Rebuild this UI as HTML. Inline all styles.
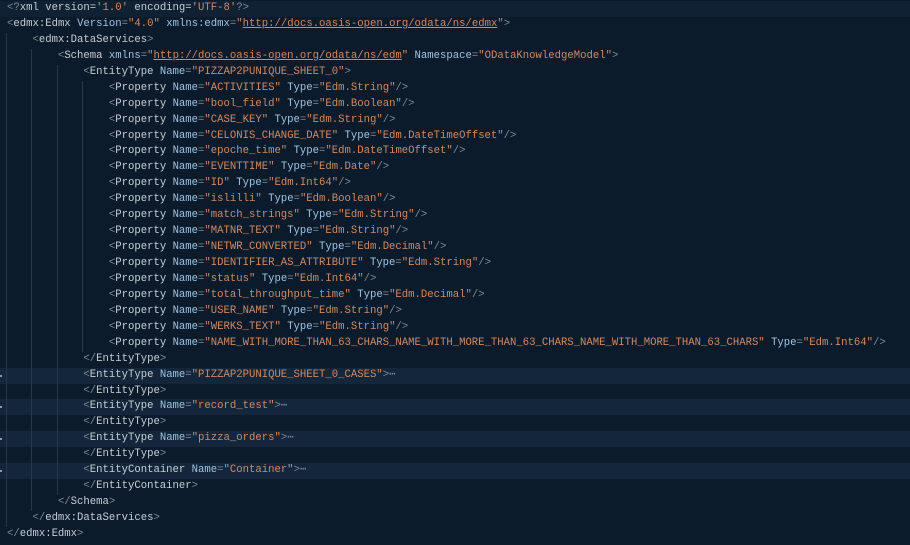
<!DOCTYPE html>
<html><head><meta charset="utf-8"><style>
html,body{margin:0;padding:0;background:#0c1b2b;width:910px;height:545px;overflow:hidden}
#c{position:relative;font-family:"Liberation Mono",monospace;font-size:10.62px;color:#c5ced6;padding-top:1px}
.l{height:15.94px;line-height:15.94px;white-space:pre;position:relative;z-index:1}
.h{background:#13263a}
.b{color:#7f8c98}.t{color:#c5ced6}.a{color:#9fc4e2}.s{color:#d08a62}.u{text-decoration:underline;text-decoration-color:#d08a62}
.g{position:absolute;width:1px;background:#26384b;z-index:2}
.m{position:absolute;left:0;width:2px;height:2px;background:#8a98a6}
.e{color:#7f8c98}
</style></head><body><div id="c">
<div class="g" style="left:6px;top:33px;height:494px"></div>
<div class="g" style="left:31px;top:49px;height:462px"></div>
<div class="g" style="left:57px;top:65px;height:430px"></div>
<div class="g" style="left:82px;top:81px;height:271px"></div>
<div style="padding-left:7px">
<div class="l" style="margin-left:-7px;padding-left:7px;background:#0f2133"><span class="b">&lt;?</span><span class="t">xml version=</span><span class="s">'1.0'</span><span class="t"> encoding=</span><span class="s">'UTF-8'</span><span class="b">?&gt;</span></div>
<div class="l"><span class="b">&lt;</span><span class="t">edmx:Edmx</span> <span class="a">Version</span><span class="b">=</span><span class="s">"4.0"</span> <span class="a">xmlns:edmx</span><span class="b">=</span><span class="s">"<span class="u">http://docs.oasis-open.org/odata/ns/edmx</span>"</span><span class="b">&gt;</span></div>
<div class="l">    <span class="b">&lt;</span><span class="t">edmx:DataServices</span><span class="b">&gt;</span></div>
<div class="l">        <span class="b">&lt;</span><span class="t">Schema</span> <span class="a">xmlns</span><span class="b">=</span><span class="s">"<span class="u">http://docs.oasis-open.org/odata/ns/edm</span>"</span> <span class="a">Namespace</span><span class="b">=</span><span class="s">"ODataKnowledgeModel"</span><span class="b">&gt;</span></div>
<div class="l">            <span class="b">&lt;</span><span class="t">EntityType</span> <span class="a">Name</span><span class="b">=</span><span class="s">"PIZZAP2PUNIQUE_SHEET_0"</span><span class="b">&gt;</span></div>
<div class="l">                <span class="b">&lt;</span><span class="t">Property</span> <span class="a">Name</span><span class="b">=</span><span class="s">"ACTIVITIES"</span> <span class="a">Type</span><span class="b">=</span><span class="s">"Edm.String"</span><span class="b">/&gt;</span></div>
<div class="l">                <span class="b">&lt;</span><span class="t">Property</span> <span class="a">Name</span><span class="b">=</span><span class="s">"bool_field"</span> <span class="a">Type</span><span class="b">=</span><span class="s">"Edm.Boolean"</span><span class="b">/&gt;</span></div>
<div class="l">                <span class="b">&lt;</span><span class="t">Property</span> <span class="a">Name</span><span class="b">=</span><span class="s">"CASE_KEY"</span> <span class="a">Type</span><span class="b">=</span><span class="s">"Edm.String"</span><span class="b">/&gt;</span></div>
<div class="l">                <span class="b">&lt;</span><span class="t">Property</span> <span class="a">Name</span><span class="b">=</span><span class="s">"CELONIS_CHANGE_DATE"</span> <span class="a">Type</span><span class="b">=</span><span class="s">"Edm.DateTimeOffset"</span><span class="b">/&gt;</span></div>
<div class="l">                <span class="b">&lt;</span><span class="t">Property</span> <span class="a">Name</span><span class="b">=</span><span class="s">"epoche_time"</span> <span class="a">Type</span><span class="b">=</span><span class="s">"Edm.DateTimeOffset"</span><span class="b">/&gt;</span></div>
<div class="l">                <span class="b">&lt;</span><span class="t">Property</span> <span class="a">Name</span><span class="b">=</span><span class="s">"EVENTTIME"</span> <span class="a">Type</span><span class="b">=</span><span class="s">"Edm.Date"</span><span class="b">/&gt;</span></div>
<div class="l">                <span class="b">&lt;</span><span class="t">Property</span> <span class="a">Name</span><span class="b">=</span><span class="s">"ID"</span> <span class="a">Type</span><span class="b">=</span><span class="s">"Edm.Int64"</span><span class="b">/&gt;</span></div>
<div class="l">                <span class="b">&lt;</span><span class="t">Property</span> <span class="a">Name</span><span class="b">=</span><span class="s">"islilli"</span> <span class="a">Type</span><span class="b">=</span><span class="s">"Edm.Boolean"</span><span class="b">/&gt;</span></div>
<div class="l">                <span class="b">&lt;</span><span class="t">Property</span> <span class="a">Name</span><span class="b">=</span><span class="s">"match_strings"</span> <span class="a">Type</span><span class="b">=</span><span class="s">"Edm.String"</span><span class="b">/&gt;</span></div>
<div class="l">                <span class="b">&lt;</span><span class="t">Property</span> <span class="a">Name</span><span class="b">=</span><span class="s">"MATNR_TEXT"</span> <span class="a">Type</span><span class="b">=</span><span class="s">"Edm.String"</span><span class="b">/&gt;</span></div>
<div class="l">                <span class="b">&lt;</span><span class="t">Property</span> <span class="a">Name</span><span class="b">=</span><span class="s">"NETWR_CONVERTED"</span> <span class="a">Type</span><span class="b">=</span><span class="s">"Edm.Decimal"</span><span class="b">/&gt;</span></div>
<div class="l">                <span class="b">&lt;</span><span class="t">Property</span> <span class="a">Name</span><span class="b">=</span><span class="s">"IDENTIFIER_AS_ATTRIBUTE"</span> <span class="a">Type</span><span class="b">=</span><span class="s">"Edm.String"</span><span class="b">/&gt;</span></div>
<div class="l">                <span class="b">&lt;</span><span class="t">Property</span> <span class="a">Name</span><span class="b">=</span><span class="s">"status"</span> <span class="a">Type</span><span class="b">=</span><span class="s">"Edm.Int64"</span><span class="b">/&gt;</span></div>
<div class="l">                <span class="b">&lt;</span><span class="t">Property</span> <span class="a">Name</span><span class="b">=</span><span class="s">"total_throughput_time"</span> <span class="a">Type</span><span class="b">=</span><span class="s">"Edm.Decimal"</span><span class="b">/&gt;</span></div>
<div class="l">                <span class="b">&lt;</span><span class="t">Property</span> <span class="a">Name</span><span class="b">=</span><span class="s">"USER_NAME"</span> <span class="a">Type</span><span class="b">=</span><span class="s">"Edm.String"</span><span class="b">/&gt;</span></div>
<div class="l">                <span class="b">&lt;</span><span class="t">Property</span> <span class="a">Name</span><span class="b">=</span><span class="s">"WERKS_TEXT"</span> <span class="a">Type</span><span class="b">=</span><span class="s">"Edm.String"</span><span class="b">/&gt;</span></div>
<div class="l">                <span class="b">&lt;</span><span class="t">Property</span> <span class="a">Name</span><span class="b">=</span><span class="s">"NAME_WITH_MORE_THAN_63_CHARS_NAME_WITH_MORE_THAN_63_CHARS_NAME_WITH_MORE_THAN_63_CHARS"</span> <span class="a">Type</span><span class="b">=</span><span class="s">"Edm.Int64"</span><span class="b">/&gt;</span></div>
<div class="l">            <span class="b">&lt;/</span><span class="t">EntityType</span><span class="b">&gt;</span></div>
<div class="l h" style="margin-left:-7px;padding-left:7px"><span class="m" style="top:7px"></span>            <span class="b">&lt;</span><span class="t">EntityType</span> <span class="a">Name</span><span class="b">=</span><span class="s">"PIZZAP2PUNIQUE_SHEET_0_CASES"</span><span class="b">&gt;</span><span class="e">⋯</span></div>
<div class="l">            <span class="b">&lt;/</span><span class="t">EntityType</span><span class="b">&gt;</span></div>
<div class="l h" style="margin-left:-7px;padding-left:7px"><span class="m" style="top:7px"></span>            <span class="b">&lt;</span><span class="t">EntityType</span> <span class="a">Name</span><span class="b">=</span><span class="s">"record_test"</span><span class="b">&gt;</span><span class="e">⋯</span></div>
<div class="l">            <span class="b">&lt;/</span><span class="t">EntityType</span><span class="b">&gt;</span></div>
<div class="l h" style="margin-left:-7px;padding-left:7px"><span class="m" style="top:7px"></span>            <span class="b">&lt;</span><span class="t">EntityType</span> <span class="a">Name</span><span class="b">=</span><span class="s">"pizza_orders"</span><span class="b">&gt;</span><span class="e">⋯</span></div>
<div class="l">            <span class="b">&lt;/</span><span class="t">EntityType</span><span class="b">&gt;</span></div>
<div class="l h" style="margin-left:-7px;padding-left:7px"><span class="m" style="top:7px"></span>            <span class="b">&lt;</span><span class="t">EntityContainer</span> <span class="a">Name</span><span class="b">=</span><span class="s">"Container"</span><span class="b">&gt;</span><span class="e">⋯</span></div>
<div class="l">            <span class="b">&lt;/</span><span class="t">EntityContainer</span><span class="b">&gt;</span></div>
<div class="l">        <span class="b">&lt;/</span><span class="t">Schema</span><span class="b">&gt;</span></div>
<div class="l">    <span class="b">&lt;/</span><span class="t">edmx:DataServices</span><span class="b">&gt;</span></div>
<div class="l"><span class="b">&lt;/</span><span class="t">edmx:Edmx</span><span class="b">&gt;</span></div>
</div></div></body></html>
